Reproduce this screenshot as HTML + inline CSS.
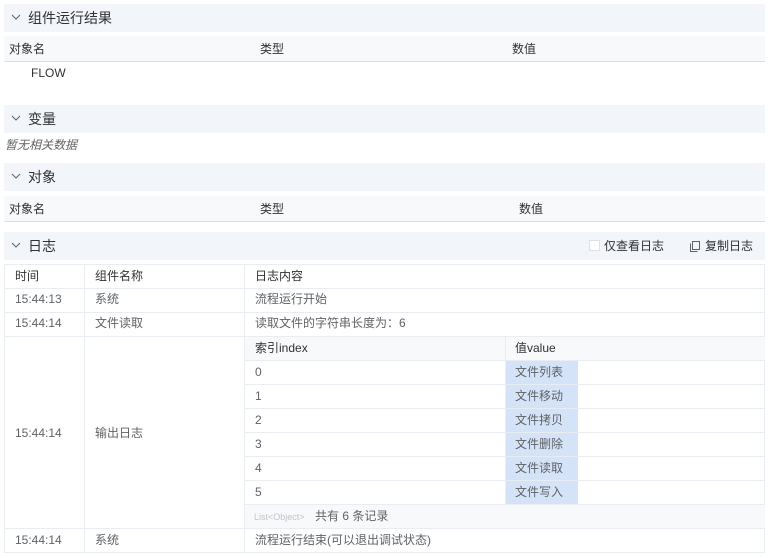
<!DOCTYPE html>
<html><head><meta charset="utf-8"><style>
*{margin:0;padding:0;box-sizing:border-box}
body{width:769px;height:558px;background:#fff;font-family:"Liberation Sans","Noto Sans CJK SC",sans-serif;font-size:12px;color:#606266;position:relative;overflow:hidden}
.a{position:absolute;white-space:nowrap;line-height:16px}
.hd{position:absolute;left:4px;width:761px;height:28px;background:#f2f5fa;font-size:14px;color:#303133;line-height:28px;padding-left:24px}
.hd svg{position:absolute;left:7px;top:10px}
.th{position:absolute;left:4px;width:761px;height:26px;background:#f8f9fb;border-bottom:1px solid #dcdfe6;color:#303133;line-height:16px}
.th span{position:absolute;top:5px}
.b{position:absolute;background:#e8ecf3}
.hl{position:absolute;left:505px;width:73px;background:#d5e3f9}
</style></head><body>
<div class="hd" style="top:4px"><svg width="10" height="7" viewBox="0 0 10 7"><path d="M1 1l4 4 4-4" stroke="#606266" fill="none"/></svg>组件运行结果</div>
<div class="th" style="top:36px"><span style="left:5px">对象名</span><span style="left:256px">类型</span><span style="left:508px">数值</span></div>
<div class="a" style="left:31px;top:65px;color:#303133">FLOW</div>
<div class="hd" style="top:105px"><svg width="10" height="7" viewBox="0 0 10 7"><path d="M1 1l4 4 4-4" stroke="#606266" fill="none"/></svg>变量</div>
<div class="a" style="left:5px;top:137px;font-style:italic">暂无相关数据</div>
<div class="hd" style="top:163px"><svg width="10" height="7" viewBox="0 0 10 7"><path d="M1 1l4 4 4-4" stroke="#606266" fill="none"/></svg>对象</div>
<div class="th" style="top:196px"><span style="left:5px">对象名</span><span style="left:256px">类型</span><span style="left:515px">数值</span></div>
<div class="hd" style="top:232px"><svg width="10" height="7" viewBox="0 0 10 7"><path d="M1 1l4 4 4-4" stroke="#606266" fill="none"/></svg>日志
<span style="position:absolute;left:585px;top:8px;width:11px;height:11px;border:1px solid #dcdfe6;background:#fff"></span>
<span style="position:absolute;left:600px;font-size:12px;color:#303133">仅查看日志</span>
<svg style="left:686px;top:9px" width="10" height="11" viewBox="0 0 10 11"><rect x="2.5" y="0.5" width="7" height="8" fill="none" stroke="#606266"/><path d="M0.5 2.5v8h7" fill="none" stroke="#606266"/></svg>
<span style="position:absolute;left:701px;font-size:12px;color:#303133">复制日志</span></div>
<div class="a" style="left:4px;top:264px;width:761px;height:289px;border:1px solid #e8ecf3"></div>
<div class="hl" style="top:360px;height:144px"></div>
<div class="a" style="left:245px;top:337px;width:520px;height:23px;background:#f8f9fa"></div>
<div class="a" style="left:245px;top:504px;width:520px;height:24px;background:#f8f9fb"></div>
<div class="b" style="left:4px;top:288px;width:761px;height:1px"></div>
<div class="b" style="left:4px;top:312px;width:761px;height:1px"></div>
<div class="b" style="left:4px;top:336px;width:761px;height:1px"></div>
<div class="b" style="left:4px;top:528px;width:761px;height:1px"></div>
<div class="b" style="left:84px;top:264px;width:1px;height:289px"></div>
<div class="b" style="left:244px;top:264px;width:1px;height:289px"></div>
<div class="b" style="left:245px;top:360px;width:520px;height:1px"></div>
<div class="b" style="left:245px;top:384px;width:520px;height:1px"></div>
<div class="b" style="left:245px;top:408px;width:520px;height:1px"></div>
<div class="b" style="left:245px;top:432px;width:520px;height:1px"></div>
<div class="b" style="left:245px;top:456px;width:520px;height:1px"></div>
<div class="b" style="left:245px;top:480px;width:520px;height:1px"></div>
<div class="b" style="left:245px;top:504px;width:520px;height:1px"></div>
<div class="b" style="left:505px;top:337px;width:1px;height:167px"></div>
<div class="a" style="left:15px;top:268px;color:#303133">时间</div>
<div class="a" style="left:95px;top:268px;color:#303133">组件名称</div>
<div class="a" style="left:255px;top:268px;color:#303133">日志内容</div>
<div class="a" style="left:15px;top:291px">15:44:13</div><div class="a" style="left:95px;top:291px">系统</div><div class="a" style="left:255px;top:291px">流程运行开始</div>
<div class="a" style="left:15px;top:315px">15:44:14</div><div class="a" style="left:95px;top:315px">文件读取</div><div class="a" style="left:255px;top:315px">读取文件的字符串长度为：6</div>
<div class="a" style="left:15px;top:425px">15:44:14</div><div class="a" style="left:95px;top:425px">输出日志</div>
<div class="a" style="left:255px;top:340px;color:#303133">索引index</div><div class="a" style="left:515px;top:340px;color:#303133">值value</div>
<div class="a" style="left:255px;top:364px">0</div><div class="a" style="left:515px;top:364px">文件列表</div>
<div class="a" style="left:255px;top:388px">1</div><div class="a" style="left:515px;top:388px">文件移动</div>
<div class="a" style="left:255px;top:412px">2</div><div class="a" style="left:515px;top:412px">文件拷贝</div>
<div class="a" style="left:255px;top:436px">3</div><div class="a" style="left:515px;top:436px">文件删除</div>
<div class="a" style="left:255px;top:460px">4</div><div class="a" style="left:515px;top:460px">文件读取</div>
<div class="a" style="left:255px;top:484px">5</div><div class="a" style="left:515px;top:484px">文件写入</div>
<div class="a" style="left:254px;top:509px;font-size:9px;color:#c0c4cc">List&lt;Object&gt;</div><div class="a" style="left:315px;top:508px">共有 6 条记录</div>
<div class="a" style="left:15px;top:532px">15:44:14</div><div class="a" style="left:95px;top:532px">系统</div><div class="a" style="left:255px;top:532px">流程运行结束(可以退出调试状态)</div>
</body></html>
